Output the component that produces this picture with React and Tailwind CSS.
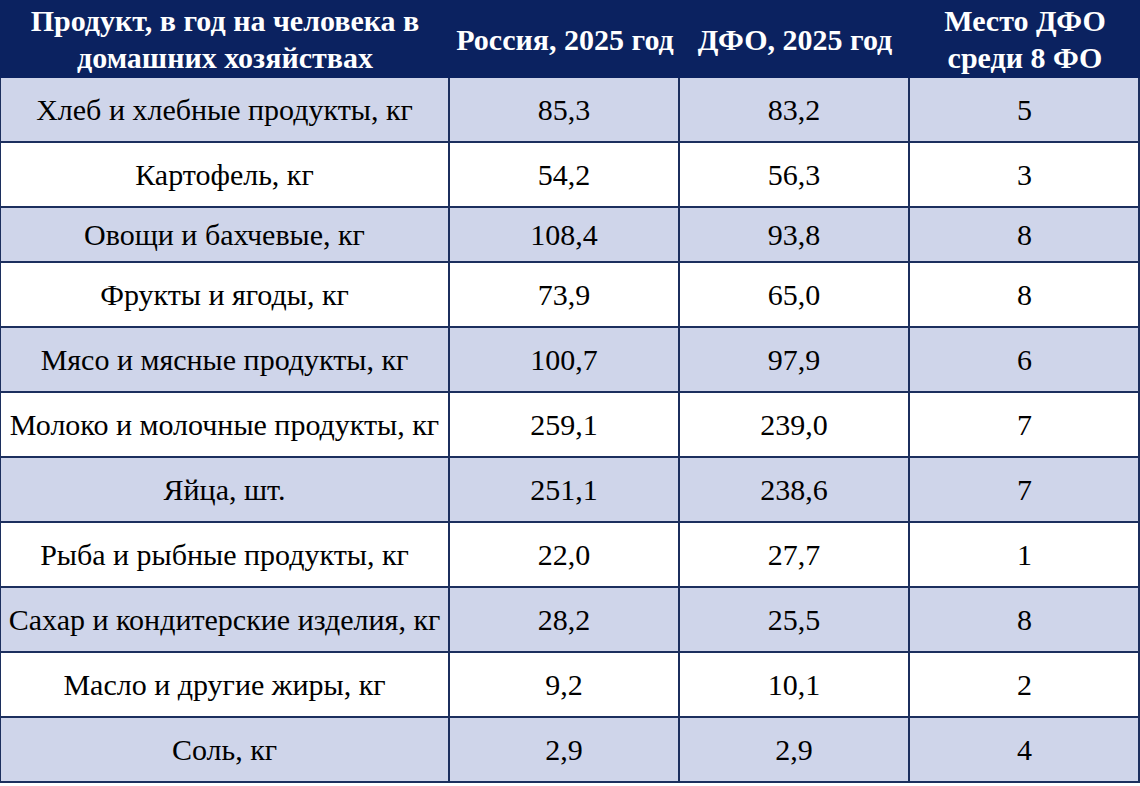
const rows = [
  ["Хлеб и хлебные продукты, кг", "85,3", "83,2", "5", true, "h-[65px]"],
  ["Картофель, кг", "54,2", "56,3", "3", false, "h-[65px]"],
  ["Овощи и бахчевые, кг", "108,4", "93,8", "8", true, "h-[55px]"],
  ["Фрукты и ягоды, кг", "73,9", "65,0", "8", false, "h-[65px]"],
  ["Мясо и мясные продукты, кг", "100,7", "97,9", "6", true, "h-[65px]"],
  ["Молоко и молочные продукты, кг", "259,1", "239,0", "7", false, "h-[65px]"],
  ["Яйца, шт.", "251,1", "238,6", "7", true, "h-[65px]"],
  ["Рыба и рыбные продукты, кг", "22,0", "27,7", "1", false, "h-[65px]"],
  ["Сахар и кондитерские изделия, кг", "28,2", "25,5", "8", true, "h-[65px]"],
  ["Масло и другие жиры, кг", "9,2", "10,1", "2", false, "h-[65px]"],
  ["Соль, кг", "2,9", "2,9", "4", true, "h-[65px]"],
];

const Cell = ({ children, className = "" }) => (
  <div className={`flex items-center justify-center text-center whitespace-nowrap ${className}`}>
    {children}
  </div>
);

export default function App() {
  return (
    <div
      className="w-[1140px] h-[786px] bg-white text-black"
      style={{ fontFamily: '"Liberation Serif", "Times New Roman", serif' }}
    >
      <div className="grid grid-cols-[450px_230px_230px_230px] h-[78px] bg-[#0b2260] text-white font-bold text-[30px] leading-[37px]">
        <Cell>
          Продукт, в год на человека в
          <br />
          домашних хозяйствах
        </Cell>
        <Cell>Россия, 2025 год</Cell>
        <Cell>ДФО, 2025 год</Cell>
        <Cell>
          Место ДФО
          <br />
          среди 8 ФО
        </Cell>
      </div>
      <div className="border-l border-r-2 border-[#1c2f5e]">
        {rows.map(([name, ru, dfo, place, shaded, h]) => (
          <div
            key={name}
            className={`grid grid-cols-[449px_230px_230px_229px] border-b-2 border-[#1c2f5e] text-[30px] ${h} ${
              shaded ? "bg-[#cfd5ea]" : "bg-white"
            }`}
          >
            <Cell className="border-r-2 border-[#1c2f5e]">{name}</Cell>
            <Cell className="border-r-2 border-[#1c2f5e]">{ru}</Cell>
            <Cell className="border-r-2 border-[#1c2f5e]">{dfo}</Cell>
            <Cell>{place}</Cell>
          </div>
        ))}
      </div>
    </div>
  );
}
